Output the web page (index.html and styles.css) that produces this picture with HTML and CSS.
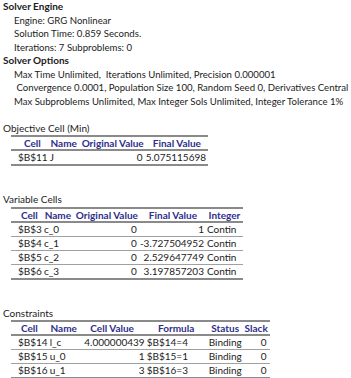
FILE: index.html
```html
<!DOCTYPE html>
<html>
<head>
<meta charset="utf-8">
<link rel="stylesheet" href="styles.css">
</head>
<body>
<div class="report">
  <div class="line h">Solver Engine</div>
  <div class="line ind">Engine: GRG Nonlinear</div>
  <div class="line ind">Solution Time: 0.859 Seconds.</div>
  <div class="line ind">Iterations: 7 Subproblems: 0</div>
  <div class="line h">Solver Options</div>
  <div class="line ind">Max Time Unlimited,&nbsp; Iterations Unlimited, Precision 0.000001</div>
  <div class="line ind">&nbsp;Convergence 0.0001, Population Size 100, Random Seed 0, Derivatives Central</div>
  <div class="line ind">Max Subproblems Unlimited, Max Integer Sols Unlimited, Integer Tolerance 1%</div>

  <div class="line title gap1">Objective Cell (Min)</div>
  <table class="tbl t-obj">
    <tr class="head">
      <th class="c-cell sh">Cell</th><th class="c-name">Name</th><th class="c-orig">Original Value</th><th class="c-final">Final Value</th>
    </tr>
    <tr>
      <td class="c-cell">$B$11</td><td class="c-name">J</td><td class="c-orig r">0</td><td class="c-final r">5.075115698</td>
    </tr>
  </table>

  <div class="line title gap2">Variable Cells</div>
  <table class="tbl t-var">
    <tr class="head">
      <th class="c-cell sh">Cell</th><th class="c-name">Name</th><th class="c-orig">Original Value</th><th class="c-final">Final Value</th><th class="c-int">Integer</th>
    </tr>
    <tr><td class="c-cell">$B$3</td><td class="c-name">c_0</td><td class="c-orig r">0</td><td class="c-final r">1</td><td class="c-int">Contin</td></tr>
    <tr><td class="c-cell">$B$4</td><td class="c-name">c_1</td><td class="c-orig r">0</td><td class="c-final r">-3.727504952</td><td class="c-int">Contin</td></tr>
    <tr><td class="c-cell">$B$5</td><td class="c-name">c_2</td><td class="c-orig r">0</td><td class="c-final r">2.529647749</td><td class="c-int">Contin</td></tr>
    <tr><td class="c-cell">$B$6</td><td class="c-name">c_3</td><td class="c-orig r">0</td><td class="c-final r">3.197857203</td><td class="c-int">Contin</td></tr>
  </table>

  <div class="line title gap2">Constraints</div>
  <table class="tbl t-con">
    <tr class="head">
      <th class="c-cell">Cell</th><th class="c-name">Name</th><th class="c-cval">Cell Value</th><th class="c-form">Formula</th><th class="c-stat">Status</th><th class="c-slack">Slack</th>
    </tr>
    <tr><td class="c-cell">$B$14</td><td class="c-name">l_c</td><td class="c-cval r">4.000000439</td><td class="c-form">$B$14=4</td><td class="c-stat">Binding</td><td class="c-slack r">0</td></tr>
    <tr><td class="c-cell">$B$15</td><td class="c-name">u_0</td><td class="c-cval r">1</td><td class="c-form">$B$15=1</td><td class="c-stat">Binding</td><td class="c-slack r">0</td></tr>
    <tr><td class="c-cell">$B$16</td><td class="c-name">u_1</td><td class="c-cval r">3</td><td class="c-form">$B$16=3</td><td class="c-stat">Binding</td><td class="c-slack r">0</td></tr>
  </table>
</div>
</body>
</html>
```

FILE: styles.css
```css
html, body {
  margin: 0;
  padding: 0;
  background: #ffffff;
}

body {
  font-family: Lato, "Open Sans", sans-serif;
  font-size: 9.6px;
  color: #1c1c1c;
  width: 351px;
  height: 378px;
  overflow: hidden;
}

.report {
  padding-left: 3px;
}

.line {
  height: 13.5px;
  line-height: 13.5px;
  white-space: nowrap;
}

.h {
  font-weight: bold;
  font-size: 10px;
}

.title {
  font-size: 10px;
}

.ind {
  padding-left: 11px;
}

.gap1 {
  margin-top: 13.5px;
}

.gap2 {
  margin-top: 27px;
}

.tbl {
  margin-left: 8px;
  border-collapse: collapse;
  table-layout: fixed;
  border-top: 2px solid #8a8a8a;
  border-bottom: 2px solid #8a8a8a;
}

.tbl th,
.tbl td {
  box-sizing: border-box;
  padding: 0;
  height: 13px;
  line-height: 13px;
  white-space: nowrap;
  overflow: hidden;
  text-align: left;
}

.tbl td {
  font-size: 10px;
}

.tbl th {
  color: #2e2e8c;
  font-weight: bold;
  font-size: 10px;
  text-align: center;
  height: 12px;
  line-height: 12px;
  border-bottom: 2px solid #8a8a8a;
}

.tbl td {
  border-bottom: 1px solid #a0a0a0;
}

.tbl tr:last-child td {
  border-bottom: 2px solid #8a8a8a;
}

.tbl td.r {
  text-align: right;
}

.c-cell { width: 29px; }
.c-name { width: 32px; }
.c-orig { width: 66px; }
.c-final { width: 61px; }
.c-int { width: 37px; }
.c-cval { width: 65px; }
.c-form { width: 63px; }
.c-stat { width: 35px; }
.c-slack { width: 27px; }

td.c-cell { padding-left: 7px; }
th.sh { padding-left: 6px; }
td.c-name { padding-left: 2px; }
td.c-orig { padding-right: 3px; }
td.c-final { padding-right: 2px; }
td.c-int { padding-left: 1px; }
td.c-form { padding-left: 2px; }
td.c-stat { padding-left: 1px; }
td.c-slack { padding-right: 3px; }
```
